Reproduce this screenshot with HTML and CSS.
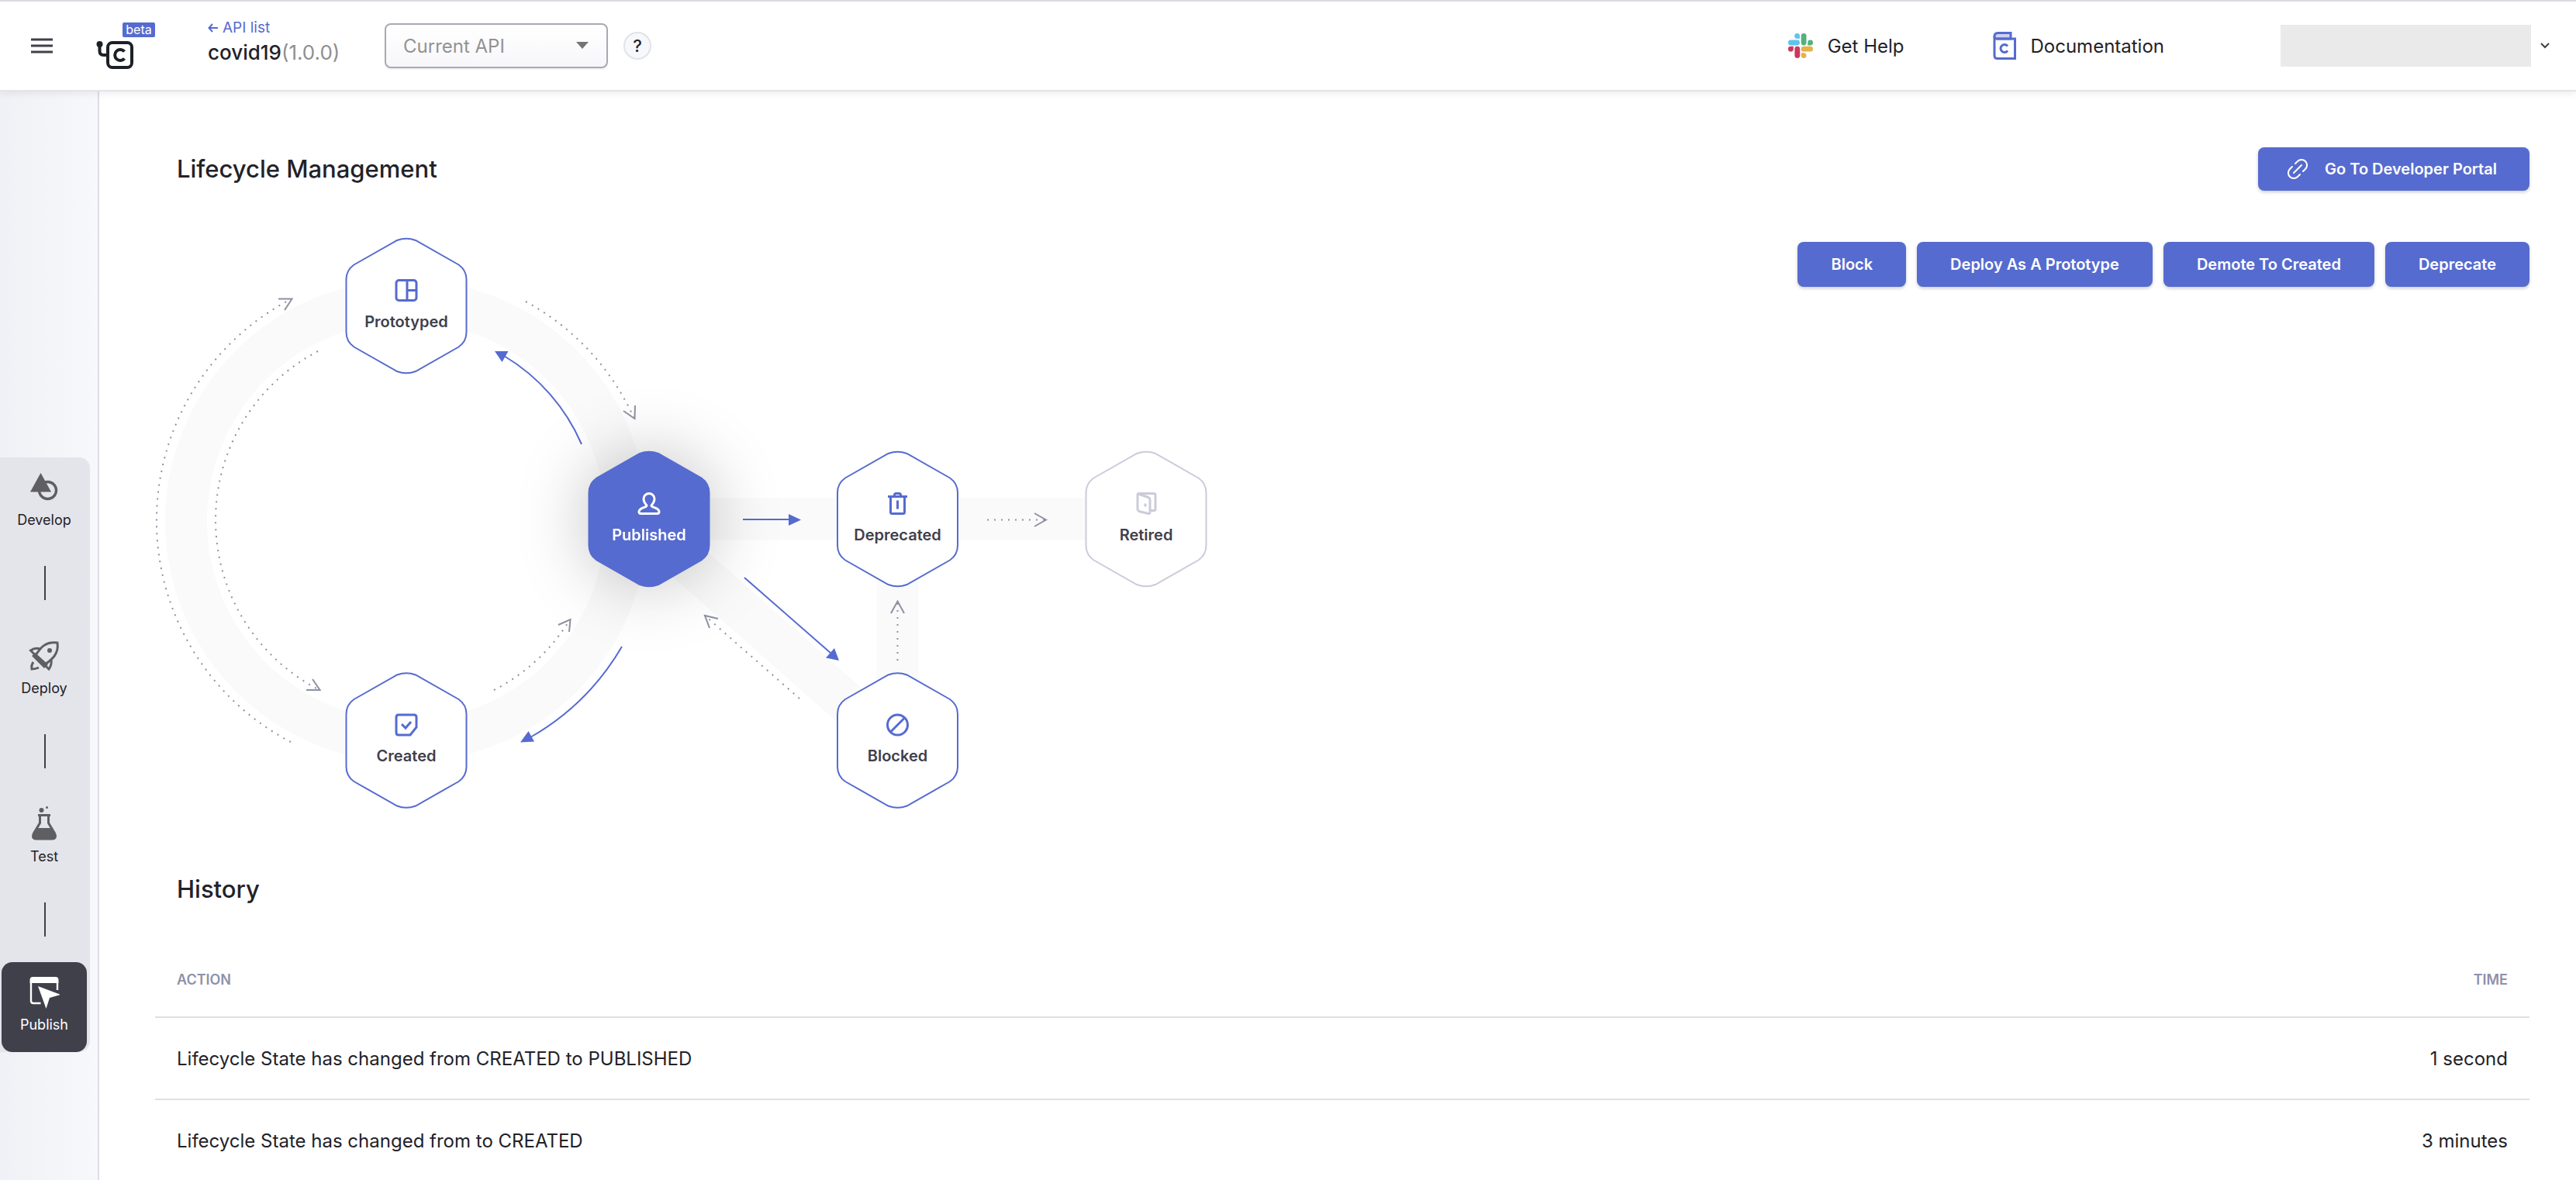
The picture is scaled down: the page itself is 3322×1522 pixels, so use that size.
FILE: index.html
```html
<!DOCTYPE html>
<html lang="en">
<head>
<meta charset="utf-8">
<meta name="viewport" content="width=device-width, initial-scale=1">
<title>covid19 – Lifecycle Management</title>
<link rel="stylesheet" href="styles.css">
</head>
<body>
<header class="topbar">
  <button class="menu-button" type="button" aria-label="Open menu">
    <svg width="28" height="20" viewBox="0 0 28 20"><path d="M0 2h28M0 10h28M0 18h28" stroke="#40404b" stroke-width="3"/></svg>
  </button>
  <a class="brand" href="#" aria-label="Home">
    <svg width="48" height="38" viewBox="0 0 48 38" fill="none" stroke="#1d2028" stroke-width="4">
      <rect x="15" y="3" width="31" height="32" rx="6"/>
      <path d="M4.500 5v9q0 5 5 5H15"/>
      <circle cx="4.500" cy="5" r="4" fill="#1d2028" stroke="none"/>
      <path d="M36.500 14.500a7 7 0 1 0 0 9"/>
    </svg>
    <span class="beta">beta</span>
  </a>
  <div class="api">
    <a class="back" href="#"><svg width="13" height="12" viewBox="0 0 13 12" fill="none" stroke="#566bcf" stroke-width="2"><path d="M6 1 1.500 6 6 11M1.500 6H13"/></svg>API list</a>
    <div class="api-name">covid19<span class="version">(1.0.0)</span></div>
  </div>
  <div class="env">
    <select class="env-select" aria-label="API version"><option>Current API</option></select>
    <svg class="env-caret" width="16" height="9" viewBox="0 0 16 9"><path d="M0 0h16L8 9z" fill="#757575"/></svg>
  </div>
  <button class="help" type="button" aria-label="Help">?</button>
  <nav class="links">
    <a class="top-link" href="#">
      <svg width="32" height="32" viewBox="0 0 32 32">
        <g fill="#61c3ec"><path d="M15 3.400a3.400 3.400 0 1 0-3.400 3.400H15z"/><rect y="8.600" width="15" height="6.800" rx="3.400"/></g>
        <g fill="#54b17f"><path d="M28.600 15.400a3.400 3.400 0 1 0-3.400-3.400v3.400z"/><rect x="16.700" width="6.800" height="15.400" rx="3.400"/></g>
        <g fill="#e5b345"><path d="M16.700 28.600a3.400 3.400 0 1 0 3.400-3.400h-3.400z"/><rect x="16.700" y="16.800" width="15.300" height="6.800" rx="3.400"/></g>
        <g fill="#cc375d"><path d="M0 20.200a3.400 3.400 0 1 0 6.800 0v-3.400H3.400A3.400 3.400 0 0 0 0 20.200z"/><rect x="8.400" y="16.800" width="6.800" height="15.200" rx="3.400"/></g>
      </svg>
      Get Help
    </a>
    <a class="top-link" href="#">
      <svg width="30" height="36" viewBox="0 0 30 36" fill="none" stroke="#566bcf" stroke-width="3">
        <path d="M2 7V6q0-4.500 4.500-4.500H23V9H5Q2 9 2 6" fill="#ccd2f1"/>
        <path d="M2 6v24.500Q2 34.500 6 34.500H28.500V9H5"/>
        <path d="M19 18.500a5 5 0 1 0 0 6"/>
      </svg>
      Documentation
    </a>
  </nav>
  <button class="account" type="button" aria-label="Account">
    <span class="account-name"></span>
    <svg width="12" height="8" viewBox="0 0 12 8" fill="none" stroke="#40404b" stroke-width="2"><path d="M1 1l5 5 5-5"/></svg>
  </button>
</header>

<div class="shell">
  <aside class="sidebar">
    <nav class="steps">
      <a class="step" href="#">
        <svg width="40" height="44" viewBox="0 0 40 44"><circle cx="24.500" cy="26.500" r="11" fill="none" stroke="#5e5e63" stroke-width="3.400"/><path d="M15.500 4 29 28.500H2z" fill="#5e5e63"/></svg>
        Develop
      </a>
      <a class="step" href="#">
        <svg width="40" height="44" viewBox="0 0 40 44" fill="none" stroke="#5e5e63" stroke-width="3"><path d="M9 22C15 13 21 4 37 6c2 14-6 21-16 28z"/><path d="M8.500 19 4 23l16 16 5-5z" fill="#5e5e63" stroke="none"/><path d="M15 14Q8 12 2.500 16l6 6M29 27q1 8-3 13l-6-6M6 31q-3 4-2 9 5 0 9-2"/><circle cx="27" cy="16" r="3" fill="#5e5e63" stroke="none"/></svg>
        Deploy
      </a>
      <a class="step" href="#">
        <svg width="40" height="44" viewBox="0 0 40 44"><path d="M14.500 13v8.500L7 34q-4 8 3 8h20q7 0 3-8l-7.500-12.500V13" fill="none" stroke="#5e5e63" stroke-width="3"/><path d="M12 10h16v3H12zM10 28h20l5 10-3 5H8l-3-5z" fill="#5e5e63"/><circle cx="16.500" cy="5" r="3" fill="#5e5e63"/><circle cx="23.500" cy="1.500" r="1.500" fill="#5e5e63"/></svg>
        Test
      </a>
      <a class="step step-active" href="#" aria-current="page">
        <svg width="40" height="44" viewBox="0 0 40 44"><path d="M3 10v24q0 3 3 3h9.500M37 20V10" fill="none" stroke="#fff" stroke-width="2.400"/><path d="M1.500 11V7q0-4 4-4h29q4 0 4 4v4zM12 15l29 11-14 4-4.500 14z" fill="#fff"/></svg>
        Publish
      </a>
    </nav>
  </aside>

  <main class="content">
    <div class="title-row">
      <h1 class="title">Lifecycle Management</h1>
      <button class="btn btn-portal" type="button">
        <svg width="26" height="26" viewBox="0 0 26 26" fill="none" stroke="#fff" stroke-width="2" stroke-linecap="round"><path d="M8 18 18 8M10 6l3-3a7 7 0 0 1 10 10l-3 3M6 10l-3 3a7 7 0 0 0 10 10l3-3"/></svg>
        Go To Developer Portal
      </button>
    </div>

    <div class="lifecycle">
      <svg class="diagram" width="1370" height="760" viewBox="200 296 1370 760" role="img" aria-label="API lifecycle states">
        <defs>
          <path id="hex" d="M-12 -84.500Q0 -89 12 -84.500L67.500 -53Q77.500 -46 77.500 -34V34Q77.500 46 67.500 53L12 84.500Q0 89 -12 84.500L-67.500 53Q-77.500 46 -77.500 34V-34Q-77.500 -46 -67.500 -53Z"/>
        </defs>
        <g class="band">
          <circle cx="524" cy="672" r="284"/>
          <path d="M837 669.500H1478M1157.500 669V955M837 681 1157 964"/>
        </g>
        <g class="dots">
          <path d="M375 957A322 322 0 0 1 375 386"/>
          <path d="M410 453A246 246 0 0 0 412 890"/>
          <path d="M678 389A322 322 0 0 1 818 540"/>
          <path d="M637 890A246 246 0 0 0 735 799"/>
          <path d="M1273 670.500H1349M1157.500 852V776M1031 901 909 794"/>
        </g>
        <path class="open-head" d="M359 385.500H376.500L367 400M395 890H412.500L403 876M804 530 818.500 540 819 523M720 806 735.500 799 734 815M1334 662 1349 670.500 1334 679M1149 791 1157.500 775.500 1166 791M926 798 909 794 915 810"/>
        <path class="flow" d="M750 573A247 247 0 0 0 650 459M802 834A322 322 0 0 1 684 951M958 670H1020M960 745 1072 843"/>
        <path class="flow-head" d="M638 453h17.500l-8 14zM671 957.500 681.500 943 689 956.500zM1033 670.500 1017 663v15zM1082 852 1065 848.500 1076 836z"/>

        <g class="node" transform="translate(524 394.500)">
          <use href="#hex"/>
          <g class="icon" transform="translate(0 -20)"><rect x="-13" y="-13" width="26" height="26" rx="3.500"/><path d="M1-13V13M1 0H13"/></g>
          <text y="27">Prototyped</text>
        </g>
        <g class="node" transform="translate(524 955)">
          <use href="#hex"/>
          <g class="icon" transform="translate(0 -20)"><path d="M-10-13H10q3 0 3 3V3L5 13H-10q-3 0-3-3V-10q0-3 3-3zM-6-1l5 5 7-8"/></g>
          <text y="27">Created</text>
        </g>
        <g class="node node-current" transform="translate(837 669.500)">
          <use href="#hex"/>
          <g class="icon" transform="translate(0 -20)"><path d="M-3 2.500C-6-1-7-3-7-6a7 7 0 0 1 14 0C7-3 6-1 3 2.500c0 3 10 2.500 10 8 0 1.500-1 2.500-2.500 2.500h-21C-12 13-13 12-13 10.500c0-5.500 10-5 10-8z"/></g>
          <text y="27">Published</text>
        </g>
        <g class="node" transform="translate(1157.500 669.500)">
          <use href="#hex"/>
          <g class="icon" transform="translate(0 -20)"><path d="M-12.500-9h25M-9-9V11q0 2 2 2H7q2 0 2-2V-9M-4-9v-2q0-2 2-2h4q2 0 2 2v2M0-4V7"/></g>
          <text y="27">Deprecated</text>
        </g>
        <g class="node" transform="translate(1157.500 955)">
          <use href="#hex"/>
          <g class="icon" transform="translate(0 -20)"><circle r="13"/><path d="M-9 9 9-9"/></g>
          <text y="27">Blocked</text>
        </g>
        <g class="node node-off" transform="translate(1478 669.500)">
          <use href="#hex"/>
          <g class="icon" transform="translate(0 -20)"><path d="M4 9h6q2 0 2-2V-11q0-2-2-2H-9q-2 0-2 2V7q0 2 2 3L3 13q2 0 2-2V-5q0-2-2-3L-9-12M-1 0V4"/></g>
          <text y="27">Retired</text>
        </g>
      </svg>
      <div class="actions">
        <button class="btn" type="button">Block</button>
        <button class="btn" type="button">Deploy As A Prototype</button>
        <button class="btn" type="button">Demote To Created</button>
        <button class="btn" type="button">Deprecate</button>
      </div>
    </div>

    <h2 class="title history-title">History</h2>
    <table class="history">
      <thead><tr><th scope="col">ACTION</th><th scope="col">TIME</th></tr></thead>
      <tbody>
        <tr><td>Lifecycle State has changed from CREATED to PUBLISHED</td><td>1 second</td></tr>
        <tr><td>Lifecycle State has changed from to CREATED</td><td>3 minutes</td></tr>
      </tbody>
    </table>
  </main>
</div>
</body>
</html>
```
FILE: styles.css
```css
* { box-sizing: border-box; }

body {
  margin: 0;
  min-height: 100vh;
  display: flex;
  flex-direction: column;
  background: #fff;
  color: #222228;
  font-family: Inter, "Liberation Sans", sans-serif;
  font-size: 24px;
}

a { color: inherit; text-decoration: none; }

button {
  font: inherit;
  border: 0;
  padding: 0;
  background: none;
}

svg { display: block; flex: none; }

/* Top bar */
.topbar {
  position: relative;
  z-index: 1;
  display: flex;
  align-items: center;
  height: 118px;
  padding: 0 34px 0 40px;
  border-top: 2px solid #dcdbe1;
  border-bottom: 2px solid #e3e3e8;
  background: #fff;
  box-shadow: 0 2px 10px rgba(0, 0, 0, 0.08);
}

.brand {
  position: relative;
  margin-left: 56px;
  padding-top: 24px;
}

.beta {
  position: absolute;
  left: 34px;
  top: 1px;
  width: 42px;
  border-radius: 2px;
  background: #566bcf;
  color: #fff;
  font-size: 16px;
  line-height: 19px;
  text-align: center;
}

.api {
  width: 228px;
  margin-left: 96px;
  padding-bottom: 6px;
}

.back {
  display: flex;
  align-items: center;
  gap: 6px;
  color: #566bcf;
  font-size: 19px;
  line-height: 24px;
}

.api-name {
  font-size: 26px;
  font-weight: 500;
  line-height: 40px;
}

.version { color: #8f8f8f; font-weight: 400; }

.env { position: relative; }

.env-select {
  appearance: none;
  width: 288px;
  height: 58px;
  padding: 0 22px;
  border: 2px solid #a9a9b2;
  border-radius: 8px;
  background: linear-gradient(#fff, #f7f7fa);
  box-shadow: 0 2px 2px rgba(0, 0, 0, 0.06);
  color: #929292;
  font: inherit;
}

.env-caret {
  position: absolute;
  right: 25px;
  top: 24px;
  pointer-events: none;
}

.help {
  width: 36px;
  height: 36px;
  margin-left: 20px;
  border: 2px solid #e2e3e8;
  border-radius: 50%;
  background: #f7f8fb;
  color: #222228;
  font-size: 22px;
  font-weight: 500;
  line-height: 32px;
}

.links {
  display: flex;
  gap: 114px;
  margin-left: auto;
}

.top-link {
  display: flex;
  align-items: center;
  gap: 19px;
}

.account {
  display: flex;
  align-items: center;
  gap: 12px;
  margin-left: 150px;
}

.account-name {
  width: 323px;
  height: 54px;
  background: #eaeaea;
}

/* Page frame */
.shell { display: flex; flex: 1; }

.sidebar {
  flex: none;
  width: 128px;
  padding-top: 472px;
  border-right: 2px solid #dcdde6;
  background: linear-gradient(90deg, #f0f1f6, #f7f8fb);
}

.steps {
  display: flex;
  flex-direction: column;
  gap: 101px;
  width: 116px;
  padding-right: 4px;
  padding-left: 2px;
  border-radius: 0 14px 14px 0;
  background: #e4e5eb;
}

.step {
  position: relative;
  display: flex;
  flex-direction: column;
  align-items: center;
  gap: 7px;
  height: 116px;
  padding-top: 16px;
  border-radius: 14px;
  font-size: 18px;
  line-height: 28px;
}

/* Line that joins a step to the next one */
.step:not(:last-child)::after {
  content: "";
  position: absolute;
  left: 55px;
  top: 140px;
  width: 2px;
  height: 44px;
  background: #40404b;
}

.step-active { background: #40404b; color: #fff; }

/* Content */
.content {
  flex: 1;
  padding: 72px 60px 0 72px;
}

.title-row {
  display: flex;
  align-items: center;
  justify-content: space-between;
  height: 56px;
}

.title {
  margin: 0;
  padding-left: 28px;
  font-size: 31px;
  font-weight: 500;
  line-height: 36px;
}

.btn {
  height: 58px;
  padding: 0 43px;
  border-radius: 8px;
  background: #566bcf;
  box-shadow: 0 2px 4px rgba(0, 0, 0, 0.2);
  color: #fff;
  font-size: 20px;
  font-weight: 600;
}

.btn-portal {
  display: flex;
  align-items: center;
  gap: 22px;
  height: 56px;
  padding: 0 42px 0 38px;
}

.lifecycle {
  display: flex;
  align-items: flex-start;
  justify-content: space-between;
  padding-top: 50px;
}

.actions {
  display: flex;
  gap: 14px;
  padding-top: 16px;
}

.history-title { margin-top: 73px; }

.history {
  width: 100%;
  margin-top: 50px;
  border-collapse: collapse;
}

.history th,
.history td {
  height: 106px;
  padding: 0 28px;
  border-bottom: 2px solid #e0e0e0;
  text-align: left;
}

.history th {
  height: 97px;
  color: #8d91a9;
  font-size: 18px;
  font-weight: 600;
}

.history th:last-child,
.history td:last-child { text-align: right; }

/* Lifecycle diagram */
.band { fill: none; stroke: #fafafa; stroke-width: 54; }
.dots { fill: none; stroke: #8d91a0; stroke-width: 2; stroke-dasharray: 2 7; }
.open-head { fill: none; stroke: #8d91a0; stroke-width: 2; }
.flow { fill: none; stroke: #566bcf; stroke-width: 2; }
.flow-head { fill: #566bcf; }

.node { fill: #fff; stroke: #566bcf; stroke-width: 2; }
.node .icon { fill: none; stroke-width: 3; }

.node text {
  fill: #40404b;
  stroke: none;
  font-size: 20px;
  font-weight: 600;
  text-anchor: middle;
}

.node-current {
  fill: #566bcf;
  filter: drop-shadow(0 0 44px rgba(0, 0, 0, 0.24));
}

.node-current .icon { stroke: #fff; }
.node-current text { fill: #fff; }
.node-off { stroke: #cbcbdb; }
```
